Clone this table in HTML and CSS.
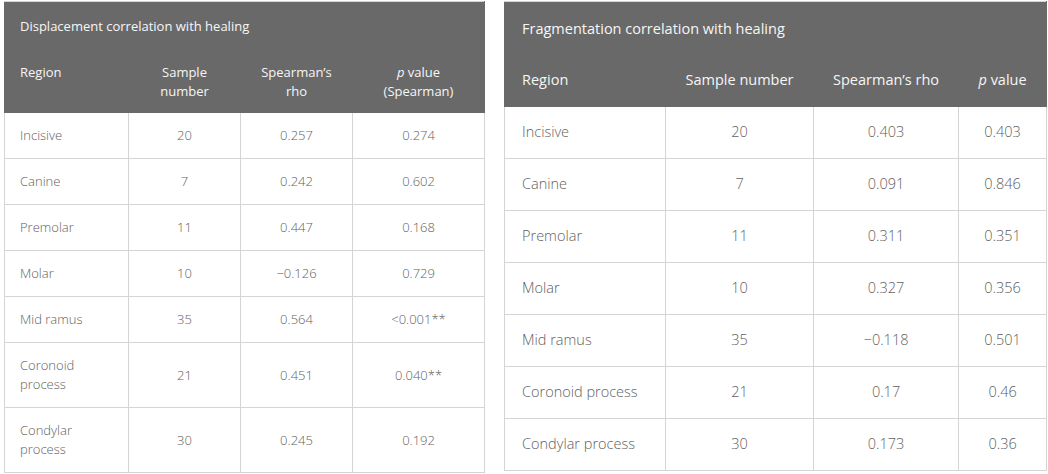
FILE: index.html
```html
<!DOCTYPE html>
<html>
<head>
<meta charset="utf-8">
<link rel="stylesheet" href="styles.css">
</head>
<body>
<div class="page">
  <table class="tbl tbl-left">
    <colgroup>
      <col class="l1"><col class="l2"><col class="l3"><col class="l4">
    </colgroup>
    <thead>
      <tr class="title-row"><th colspan="4">Displacement correlation with healing</th></tr>
      <tr class="head-row">
        <th class="first">Region</th>
        <th>Sample<br>number</th>
        <th>Spearman’s<br>rho</th>
        <th><i>p</i> value<br>(Spearman)</th>
      </tr>
    </thead>
    <tbody>
      <tr><td class="first">Incisive</td><td>20</td><td>0.257</td><td>0.274</td></tr>
      <tr><td class="first">Canine</td><td>7</td><td>0.242</td><td>0.602</td></tr>
      <tr><td class="first">Premolar</td><td>11</td><td>0.447</td><td>0.168</td></tr>
      <tr><td class="first">Molar</td><td>10</td><td>−0.126</td><td>0.729</td></tr>
      <tr><td class="first">Mid ramus</td><td>35</td><td>0.564</td><td>&lt;0.001**</td></tr>
      <tr><td class="first">Coronoid<br>process</td><td>21</td><td>0.451</td><td>0.040**</td></tr>
      <tr><td class="first">Condylar<br>process</td><td>30</td><td>0.245</td><td>0.192</td></tr>
    </tbody>
  </table>

  <table class="tbl tbl-right">
    <colgroup>
      <col class="r1"><col class="r2"><col class="r3"><col class="r4">
    </colgroup>
    <thead>
      <tr class="title-row"><th colspan="4">Fragmentation correlation with healing</th></tr>
      <tr class="head-row">
        <th class="first">Region</th>
        <th>Sample number</th>
        <th>Spearman’s rho</th>
        <th><i>p</i> value</th>
      </tr>
    </thead>
    <tbody>
      <tr><td class="first">Incisive</td><td>20</td><td>0.403</td><td>0.403</td></tr>
      <tr><td class="first">Canine</td><td>7</td><td>0.091</td><td>0.846</td></tr>
      <tr><td class="first">Premolar</td><td>11</td><td>0.311</td><td>0.351</td></tr>
      <tr><td class="first">Molar</td><td>10</td><td>0.327</td><td>0.356</td></tr>
      <tr><td class="first">Mid ramus</td><td>35</td><td>−0.118</td><td>0.501</td></tr>
      <tr><td class="first">Coronoid process</td><td>21</td><td>0.17</td><td>0.46</td></tr>
      <tr><td class="first">Condylar process</td><td>30</td><td>0.173</td><td>0.36</td></tr>
    </tbody>
  </table>
</div>
</body>
</html>
```

FILE: styles.css
```css
html, body {
  margin: 0;
  padding: 0;
  background: #ffffff;
}

.page {
  display: flex;
  align-items: flex-start;
  gap: 19px;
  padding: 1px 0 0 4px;
  font-family: "Open Sans", "Lato", sans-serif;
}

.tbl {
  border-collapse: collapse;
  table-layout: fixed;
  border: 1px solid #d4d4d4;
  background: #ffffff;
}

.tbl th,
.tbl td {
  border: 1px solid #d4d4d4;
  text-align: center;
  font-weight: 300;
  color: #616161;
}

.tbl thead th {
  background: #696969;
  color: #f6f6f6;
  font-weight: 400;
  vertical-align: top;
  border-left-color: #696969;
  border-right-color: #696969;
  border-bottom-color: #696969;
}

.tbl tbody td {
  vertical-align: middle;
}

.tbl .first {
  text-align: left;
}

.tbl .title-row th {
  text-align: left;
}

/* Left table */
.tbl-left {
  width: 480px;
  font-size: 13px;
  line-height: 19px;
}
.tbl-left .l1 { width: 124px; }
.tbl-left .l2 { width: 112px; }
.tbl-left .l3 { width: 112px; }
.tbl-left .l4 { width: 132px; }
.tbl-left th,
.tbl-left td {
  padding: 13px 15px;
}
.tbl-left .title-row th {
  padding-top: 15px;
  padding-bottom: 11px;
}
.tbl-left .head-row th {
  padding-top: 15px;
  padding-bottom: 11px;
}

/* Right table */
.tbl-right {
  width: 542px;
  font-size: 14.5px;
  line-height: 20px;
}
.tbl-right .r1 { width: 161px; }
.tbl-right .r2 { width: 148px; }
.tbl-right .r3 { width: 145px; }
.tbl-right .r4 { width: 88px; }
.tbl-right th,
.tbl-right td {
  padding: 15px 17px 16px;
}
.tbl-right .title-row th {
  padding-top: 17px;
  padding-bottom: 15px;
}
```
